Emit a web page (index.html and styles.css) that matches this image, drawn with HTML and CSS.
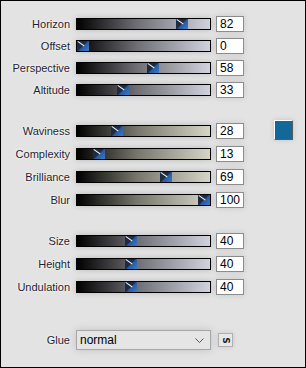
FILE: index.html
```html
<!DOCTYPE html>
<html>
<head>
<meta charset="utf-8">
<link rel="stylesheet" href="styles.css">
</head>
<body>
<div class="frame">
  <div class="group g1">
    <div class="row"><span class="label">Horizon</span><div class="track cool"><i class="thumb" style="left:99px"></i></div><span class="val">82</span></div>
    <div class="row"><span class="label">Offset</span><div class="track cool"><i class="thumb" style="left:0px"></i></div><span class="val">0</span></div>
    <div class="row"><span class="label">Perspective</span><div class="track cool"><i class="thumb" style="left:70px"></i></div><span class="val">58</span></div>
    <div class="row"><span class="label">Altitude</span><div class="track cool"><i class="thumb" style="left:40px"></i></div><span class="val">33</span></div>
  </div>
  <div class="group g2">
    <div class="row"><span class="label">Waviness</span><div class="track warm"><i class="thumb" style="left:34px"></i></div><span class="val">28</span><span class="swatch"></span></div>
    <div class="row"><span class="label">Complexity</span><div class="track warm"><i class="thumb" style="left:16px"></i></div><span class="val">13</span></div>
    <div class="row"><span class="label">Brilliance</span><div class="track warm"><i class="thumb" style="left:83px"></i></div><span class="val">69</span></div>
    <div class="row"><span class="label">Blur</span><div class="track warm"><i class="thumb" style="left:121px"></i></div><span class="val">100</span></div>
  </div>
  <div class="group g3">
    <div class="row"><span class="label">Size</span><div class="track cool"><i class="thumb" style="left:48px"></i></div><span class="val">40</span></div>
    <div class="row"><span class="label">Height</span><div class="track cool"><i class="thumb" style="left:48px"></i></div><span class="val">40</span></div>
    <div class="row"><span class="label">Undulation</span><div class="track cool"><i class="thumb" style="left:48px"></i></div><span class="val">40</span></div>
  </div>
  <div class="glue">
    <span class="label">Glue</span>
    <div class="select"><span>normal</span>
      <svg class="chev" width="9" height="5" viewBox="0 0 9 5"><path d="M0.5 0.5 L4.5 4.5 L8.5 0.5" fill="none" stroke="#555" stroke-width="1"/></svg>
    </div>
    <span class="sbtn"><b>S</b></span>
  </div>
</div>
</body>
</html>
```
FILE: styles.css
```css
html, body { margin: 0; padding: 0; background: #e3e3e3; }
.frame {
  width: 306px; height: 368px; box-sizing: border-box;
  border: 1px solid #000; background: #e3e3e3;
  font-family: "Liberation Sans", Arial, sans-serif;
}
.g1 { padding-top: 12px; }
.g1 .row { height: 22px; }
.g2 { margin-top: 18px; }
.g3 { margin-top: 18px; }
.g2 .row, .g3 .row { height: 23px; }
.row { display: flex; align-items: center; }
.label {
  width: 69px; text-align: right; font-size: 11px; color: #1c1c44;
  text-shadow: 0 0 2px #fffbe0, 0 0 3px #fffbe0;
}
.track {
  position: relative; margin-left: 6px; width: 135px; height: 12px; box-sizing: border-box;
  border: 1px solid #000;
  box-shadow: 0 0 6px rgba(0,0,0,0.18);
}
.cool { background: linear-gradient(to right, #000 0%, #6e6e74 45%, #d2d2de 100%); }
.warm { background: linear-gradient(to right, #000 0%, #76766c 45%, #d6d6c6 100%); }
.thumb {
  position: absolute; top: 0; width: 12px; height: 10px; overflow: hidden;
  background: linear-gradient(135deg, #1d2a40 0%, #1d2a40 45%, #2a5a9e 55%, #3a7ccc 100%);
}
.thumb::after {
  content: ""; position: absolute; left: 0; top: 4px; width: 8px; height: 1px;
  background: #e8eef8; transform: rotate(35deg); transform-origin: 0 0; top: 0; left: 1px;
}
.val {
  margin-left: 5px; width: 28px; height: 16px; box-sizing: border-box;
  border: 1px solid #8c8c8c; background: #fff; font-size: 12px; line-height: 14px;
  padding-left: 3px; color: #000;
  box-shadow: 0 0 6px rgba(0,0,0,0.12);
}
.swatch {
  margin-left: 30px; margin-top: -2px; width: 19px; height: 20px; box-sizing: border-box;
  background: #12689a;
  border-top: 1px solid #fff; border-left: 1px solid #fff;
  border-bottom: 1px solid #5a5a5a; border-right: 1px solid #5a5a5a;
  box-shadow: 0 0 5px rgba(0,0,0,0.15);
}
.glue { display: flex; align-items: center; margin-top: 32px; }
.select {
  margin-left: 6px; width: 135px; height: 20px; box-sizing: border-box;
  border: 1px solid #a6a6a6; background: #e5e5e5;
  display: flex; align-items: center; justify-content: space-between;
  padding: 0 6px 0 3px; font-size: 12px; color: #000;
  box-shadow: 0 0 8px rgba(0,0,0,0.15);
}
.chev { display: block; }
.sbtn {
  margin-left: 7px; width: 15px; height: 14px; box-sizing: border-box;
  border: 1px solid #b0b0b0; background: #e8e8e8;
  display: flex; align-items: center; justify-content: center;
  box-shadow: 0 0 5px rgba(0,0,0,0.12);
}
.sbtn b { font-size: 9px; line-height: 9px; transform: rotate(90deg); color: #222; font-family: "DejaVu Sans", sans-serif; }
```
